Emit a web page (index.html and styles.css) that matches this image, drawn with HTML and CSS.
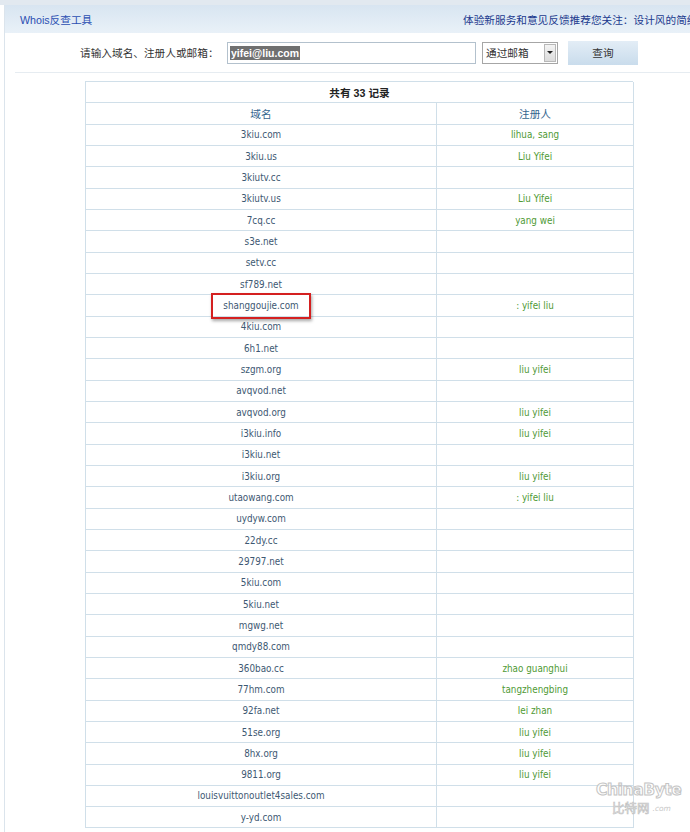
FILE: index.html
```html
<!DOCTYPE html>
<html lang="zh-CN">
<head>
<meta charset="utf-8">
<title>Whois反查工具</title>
<link rel="stylesheet" href="styles.css">
</head>
<body>
<div class="topstrip"></div>
<div class="page">
  <div class="hdr">
    <div class="hdr-title">Whois反查工具</div>
    <div class="hdr-notice"><span>体验新服务和意见反馈推荐您关注：设计风的简约首页</span></div>
  </div>
  <div class="search">
    <span class="search-label">请输入域名、注册人或邮箱：</span>
    <div class="search-input"><span class="sel-text">yifei@liu.com</span></div>
    <div class="search-select"><span class="select-text">通过邮箱</span><span class="select-btn"><span class="arrow"></span></span></div>
    <div class="search-btn">查询</div>
  </div>
  <div class="sep"></div>
  <div class="tbl">
    <div class="cell title">共有 33 记录</div>
    <div class="cell head">域名</div><div class="cell head">注册人</div>
    <div class="cell d">3kiu.com</div><div class="cell r">lihua, sang</div>
    <div class="cell d">3kiu.us</div><div class="cell r">Liu Yifei</div>
    <div class="cell d">3kiutv.cc</div><div class="cell r"></div>
    <div class="cell d">3kiutv.us</div><div class="cell r">Liu Yifei</div>
    <div class="cell d">7cq.cc</div><div class="cell r">yang wei</div>
    <div class="cell d">s3e.net</div><div class="cell r"></div>
    <div class="cell d">setv.cc</div><div class="cell r"></div>
    <div class="cell d">sf789.net</div><div class="cell r"></div>
    <div class="cell d"><span class="mark">shanggoujie.com</span></div><div class="cell r">: yifei liu</div>
    <div class="cell d">4kiu.com</div><div class="cell r"></div>
    <div class="cell d">6h1.net</div><div class="cell r"></div>
    <div class="cell d">szgm.org</div><div class="cell r">liu yifei</div>
    <div class="cell d">avqvod.net</div><div class="cell r"></div>
    <div class="cell d">avqvod.org</div><div class="cell r">liu yifei</div>
    <div class="cell d">i3kiu.info</div><div class="cell r">liu yifei</div>
    <div class="cell d">i3kiu.net</div><div class="cell r"></div>
    <div class="cell d">i3kiu.org</div><div class="cell r">liu yifei</div>
    <div class="cell d">utaowang.com</div><div class="cell r">: yifei liu</div>
    <div class="cell d">uydyw.com</div><div class="cell r"></div>
    <div class="cell d">22dy.cc</div><div class="cell r"></div>
    <div class="cell d">29797.net</div><div class="cell r"></div>
    <div class="cell d">5kiu.com</div><div class="cell r"></div>
    <div class="cell d">5kiu.net</div><div class="cell r"></div>
    <div class="cell d">mgwg.net</div><div class="cell r"></div>
    <div class="cell d">qmdy88.com</div><div class="cell r"></div>
    <div class="cell d">360bao.cc</div><div class="cell r">zhao guanghui</div>
    <div class="cell d">77hm.com</div><div class="cell r">tangzhengbing</div>
    <div class="cell d">92fa.net</div><div class="cell r">lei zhan</div>
    <div class="cell d">51se.org</div><div class="cell r">liu yifei</div>
    <div class="cell d">8hx.org</div><div class="cell r">liu yifei</div>
    <div class="cell d">9811.org</div><div class="cell r">liu yifei</div>
    <div class="cell d">louisvuittonoutlet4sales.com</div><div class="cell r"></div>
    <div class="cell d">y-yd.com</div><div class="cell r"></div>
  </div>
</div>
<div class="watermark">
  <div class="wm-main">ChinaByte</div>
  <div class="wm-sub"><span class="wm-cn">比特网</span><span class="wm-com">.com</span></div>
</div>
</body>
</html>
```
FILE: styles.css
```css
html, body {
  margin: 0;
  padding: 0;
  background: #ffffff;
}
body {
  font-family: "DejaVu Sans Condensed", "Liberation Sans", "Noto Sans CJK SC", sans-serif;
  font-size: 9.8px;
  color: #333;
  width: 690px;
  height: 832px;
  overflow: hidden;
  position: relative;
}
.topstrip {
  height: 5px;
  background: #e2e9f0;
}
.page {
  margin-left: 4px;
  border-left: 1px solid #dbe4ec;
  min-height: 827px;
}
.hdr {
  height: 28px;
  display: flex;
  justify-content: space-between;
  align-items: center;
  background: linear-gradient(#d8e5f1, #e9f1f8);
  font-family: "Liberation Sans", "Noto Sans CJK SC", sans-serif;
  font-size: 10.67px;
}
.hdr-title {
  padding-left: 15px;
  color: #2b4fb2;
}
.hdr-notice {
  flex: 0 0 227px;
  width: 227px;
  white-space: nowrap;
  overflow: hidden;
  color: #1c3a8e;
}
.search {
  display: flex;
  align-items: center;
  height: 39px;
  padding-left: 75px;
  font-family: "Noto Sans CJK SC", sans-serif;
  font-size: 10.67px;
}
.search-label {
  color: #333;
  width: 147px;
}
.search-input {
  box-sizing: border-box;
  width: 249px;
  height: 22px;
  border: 1px solid #b3c1cd;
  background: #fff;
  display: flex;
  align-items: center;
  padding-left: 2px;
}
.sel-text {
  background: #707070;
  color: #fff;
  font-family: "Liberation Sans", sans-serif;
  font-weight: bold;
  font-size: 10.5px;
  line-height: 14px;
  padding: 0 1px;
}
.search-select {
  box-sizing: border-box;
  margin-left: 6px;
  width: 76px;
  height: 22px;
  border: 1px solid #a6a6a6;
  background: #fff;
  display: flex;
  align-items: center;
  justify-content: space-between;
  padding: 1px 1px 1px 3px;
}
.select-text {
  color: #333;
}
.select-btn {
  box-sizing: border-box;
  width: 12px;
  height: 18px;
  border: 1px solid #b8b8b8;
  background: linear-gradient(#f4f4f4, #dcdcdc);
  display: flex;
  align-items: center;
  justify-content: center;
}
.arrow {
  width: 0;
  height: 0;
  border-left: 3px solid transparent;
  border-right: 3px solid transparent;
  border-top: 3px solid #222;
}
.search-btn {
  margin-left: 10px;
  width: 70px;
  height: 24px;
  display: flex;
  align-items: center;
  justify-content: center;
  background: linear-gradient(#e3edf6, #c9dcec);
  color: #333;
}
.sep {
  margin-left: 10px;
  height: 1px;
  background: #e6ecf1;
}
.tbl {
  margin-top: 8px;
  margin-left: 80px;
  width: 548px;
  display: grid;
  grid-template-columns: 351px 197px;
  grid-auto-rows: 21.333px;
  border-top: 1px solid #d0dfe9;
  border-left: 1px solid #d0dfe9;
  box-sizing: border-box;
}
.cell {
  box-sizing: border-box;
  border-right: 1px solid #d0dfe9;
  border-bottom: 1px solid #d0dfe9;
  display: flex;
  align-items: center;
  justify-content: center;
  white-space: nowrap;
}
.title {
  grid-column: 1 / 3;
  font-family: "Liberation Sans", "Noto Sans CJK SC", sans-serif;
  font-weight: bold;
  font-size: 10.67px;
  color: #222;
}
.head {
  font-family: "Noto Sans CJK SC", sans-serif;
  font-size: 10.67px;
  color: #35668f;
}
.d {
  color: #3d5872;
}
.r {
  color: #4f9a36;
}
.mark {
  position: relative;
}
.mark::after {
  content: "";
  position: absolute;
  left: -12px;
  right: -12px;
  top: -7px;
  bottom: -8px;
  border: 2px solid #d42020;
  box-shadow: 1px 2px 3px rgba(0, 0, 0, 0.35);
}
.watermark {
  position: absolute;
  left: 596px;
  top: 780px;
  width: 92px;
  pointer-events: none;
}
.wm-main {
  font-family: "DejaVu Sans", sans-serif;
  font-weight: bold;
  font-size: 15.5px;
  letter-spacing: -0.4px;
  color: rgba(255, 255, 255, 0.7);
  -webkit-text-stroke: 1px #c4c4c4;
  line-height: 20px;
}
.wm-sub {
  line-height: 15px;
  display: flex;
  align-items: flex-end;
  padding-left: 16px;
}
.wm-cn {
  font-family: "Noto Sans CJK SC", sans-serif;
  font-size: 12.5px;
  line-height: 15px;
  color: rgba(255, 255, 255, 0.7);
  -webkit-text-stroke: 0.7px #c4c4c4;
}
.wm-com {
  font-family: "DejaVu Sans", sans-serif;
  font-size: 7.5px;
  line-height: 12px;
  font-style: italic;
  color: #c8c8c8;
  margin-left: 3px;
}
```
